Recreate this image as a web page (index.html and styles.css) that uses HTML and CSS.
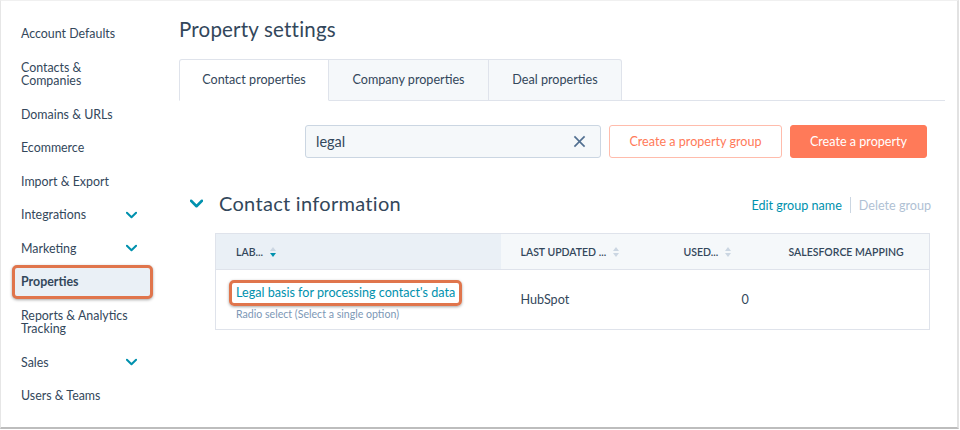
FILE: index.html
```html
<!DOCTYPE html>
<html>
<head>
	<title>Property settings</title>
	<link rel="stylesheet" href="styles.css">
</head>
<body>
	<div class="frame">
		<ul class="sidebar">
			<li>Account Defaults</li>
			<li>Contacts &amp;<br>Companies</li>
			<li>Domains &amp; URLs</li>
			<li>Ecommerce</li>
			<li>Import &amp; Export</li>
			<li class="has-sub">Integrations <svg class="chev" viewBox="0 0 12 8"><polyline points="1,1.5 6,6.5 11,1.5"/></svg></li>
			<li class="has-sub">Marketing <svg class="chev" viewBox="0 0 12 8"><polyline points="1,1.5 6,6.5 11,1.5"/></svg></li>
			<li class="active">Properties</li>
			<li>Reports &amp; Analytics<br>Tracking</li>
			<li class="has-sub">Sales <svg class="chev" viewBox="0 0 12 8"><polyline points="1,1.5 6,6.5 11,1.5"/></svg></li>
			<li>Users &amp; Teams</li>
		</ul>
		<div class="main">
			<h1 class="title">Property settings</h1>
			<div class="tabs">
				<div class="tab current">Contact properties</div>
				<div class="tab">Company properties</div>
				<div class="tab">Deal properties</div>
			</div>
			<div class="toolbar">
				<div class="search">
					<span>legal</span>
					<svg class="clear" viewBox="0 0 14 14"><line x1="1.5" y1="1.5" x2="12.5" y2="12.5"/><line x1="12.5" y1="1.5" x2="1.5" y2="12.5"/></svg>
				</div>
				<div class="btn btn-outline">Create a property group</div>
				<div class="btn btn-primary">Create a property</div>
			</div>
			<div class="group-head">
				<svg class="group-chev" viewBox="0 0 12 8"><polyline points="1,1.5 6,6.5 11,1.5"/></svg>
				<h2>Contact information</h2>
				<div class="group-actions">
					<span class="edit">Edit group name</span>
					<span class="sep"></span>
					<span class="delete">Delete group</span>
				</div>
			</div>
			<table class="props">
				<thead>
					<tr>
						<th class="sorted">LAB... <span class="sort"><i class="up"></i><i class="down"></i></span></th>
						<th>LAST UPDATED ... <span class="sort"><i class="up"></i><i class="down"></i></span></th>
						<th>USED... <span class="sort"><i class="up"></i><i class="down"></i></span></th>
						<th>SALESFORCE MAPPING</th>
					</tr>
				</thead>
				<tbody>
					<tr>
						<td>
							<span class="prop-link">Legal basis for processing contact's data</span>
							<div class="prop-type">Radio select (Select a single option)</div>
						</td>
						<td>HubSpot</td>
						<td class="num">0</td>
						<td></td>
					</tr>
				</tbody>
			</table>
		</div>
	</div>
</body>
</html>
```
FILE: styles.css
```css
*{
	padding: 0;
	margin: 0;
	box-sizing: border-box;
}
body{
	font-family: Lato, "Open Sans", sans-serif;
	color: #33475b;
	background: #fff;
}
li{
	list-style: none;
}
.frame{
	width: 959px;
	height: 429px;
	display: flex;
	border-top: 1px solid #f0f0f0;
	border-left: 1px solid #e6e6e6;
	border-right: 2px solid #e2e2e2;
	border-bottom: 2px solid #bdbdbd;
}
.sidebar{
	width: 178px;
	padding-top: 16px;
	flex-shrink: 0;
}
.sidebar li{
	display: flex;
	align-items: center;
	justify-content: space-between;
	width: 141px;
	margin-left: 11px;
	padding: 10px 16px 10px 9px;
	font-size: 12.4px;
	line-height: 13.5px;
	color: #33475b;
}
.sidebar li.active{
	font-weight: 700;
	background: #eaf0f6;
	border: 3px solid #e0754c;
	border-radius: 5px;
	padding: 7px 13px 7px 6px;
	box-shadow: 0 1px 3px rgba(0,0,0,0.35);
}
.chev{
	width: 11px;
	height: 8px;
	fill: none;
	stroke: #0091ae;
	stroke-width: 2.2;
	stroke-linecap: round;
	stroke-linejoin: round;
}
.main{
	flex: 1;
	padding-right: 12px;
}
.title{
	font-size: 20.5px;
	font-weight: 400;
	line-height: 28px;
	margin-top: 14px;
	letter-spacing: 0.2px;
}
.tabs{
	display: flex;
	margin-top: 16px;
	border-bottom: 1px solid #dfe3eb;
}
.tab{
	height: 42px;
	line-height: 40px;
	font-size: 12.6px;
	text-align: center;
	background: #f5f8fa;
	border: 1px solid #dfe3eb;
	border-left: none;
	margin-bottom: -1px;
}
.tab:first-child{
	border-left: 1px solid #dfe3eb;
	border-radius: 3px 0 0 0;
}
.tab:last-child{
	border-radius: 0 3px 0 0;
}
.tab.current{
	background: #fff;
	border-bottom-color: #fff;
	width: 150px;
}
.tab:nth-child(2){
	width: 160px;
}
.tab:nth-child(3){
	width: 133px;
}
.toolbar{
	display: flex;
	justify-content: flex-end;
	gap: 8px;
	margin-top: 24px;
	padding-right: 18px;
}
.search{
	width: 296px;
	height: 33px;
	display: flex;
	align-items: center;
	justify-content: space-between;
	padding: 0 14px 0 10px;
	background: #f5f8fa;
	border: 1px solid #cbd6e2;
	border-radius: 3px;
	font-size: 14.5px;
}
.clear{
	width: 13px;
	height: 13px;
	stroke: #516f90;
	stroke-width: 1.8;
}
.btn{
	height: 33px;
	line-height: 31px;
	border-radius: 3px;
	font-size: 12.6px;
	text-align: center;
}
.btn-outline{
	width: 173px;
	border: 1px solid #ffbcac;
	color: #ff7a59;
	background: #fff;
}
.btn-primary{
	width: 137px;
	border: 1px solid #ff7a59;
	background: #ff7a59;
	color: #fff;
}
.group-head{
	display: flex;
	align-items: center;
	margin-top: 31px;
	padding-left: 11px;
	padding-right: 14px;
	height: 28px;
}
.group-chev{
	width: 13px;
	height: 9px;
	fill: none;
	stroke: #0091ae;
	stroke-width: 2.4;
	stroke-linecap: round;
	stroke-linejoin: round;
	margin-right: 16px;
}
.group-head h2{
	font-size: 20px;
	font-weight: 400;
	letter-spacing: 0.3px;
	flex: 1;
}
.group-actions{
	display: flex;
	align-items: center;
	font-size: 12.6px;
	margin-top: 4px;
}
.edit{
	color: #0091ae;
}
.sep{
	width: 1px;
	height: 16px;
	background: #cbd6e2;
	margin: 0 8px 0 8px;
}
.delete{
	color: #b0c1d4;
}
.props{
	margin-top: 16px;
	margin-left: 36px;
	width: 715px;
	border-collapse: collapse;
	border: 1px solid #dfe3eb;
}
.props th{
	height: 36px;
	background: #f5f8fa;
	font-size: 10.5px;
	font-weight: 600;
	text-align: left;
	padding-left: 20px;
	border-bottom: 1px solid #dfe3eb;
	white-space: nowrap;
}
.props th.sorted{
	background: #eaf0f6;
	width: 285px;
}
.props th:nth-child(2){
	width: 163px;
}
.props th:nth-child(3){
	width: 105px;
}
.sort{
	display: inline-flex;
	flex-direction: column;
	gap: 2px;
	vertical-align: middle;
	margin-left: 4px;
	margin-top: -2px;
}
.sort i{
	width: 0;
	height: 0;
	border-left: 3.5px solid transparent;
	border-right: 3.5px solid transparent;
}
.sort .up{
	border-bottom: 4px solid #cbd6e2;
}
.sort .down{
	border-top: 4px solid #cbd6e2;
}
.sorted .sort .down{
	border-top-color: #0091ae;
}
.props td{
	height: 60px;
	font-size: 12.6px;
	padding-left: 20px;
	vertical-align: middle;
}
.prop-link{
	display: inline-block;
	color: #0091ae;
	padding: 2px 4px 3px 4px;
	margin-left: -7px;
	border: 3px solid #e0754c;
	border-radius: 5px;
	box-shadow: 0 1px 3px rgba(0,0,0,0.35);
	line-height: 15px;
}
.prop-type{
	font-size: 10.6px;
	color: #7c98b6;
	margin-top: 2px;
}
.props td.num{
	padding-left: 78px;
}
```
